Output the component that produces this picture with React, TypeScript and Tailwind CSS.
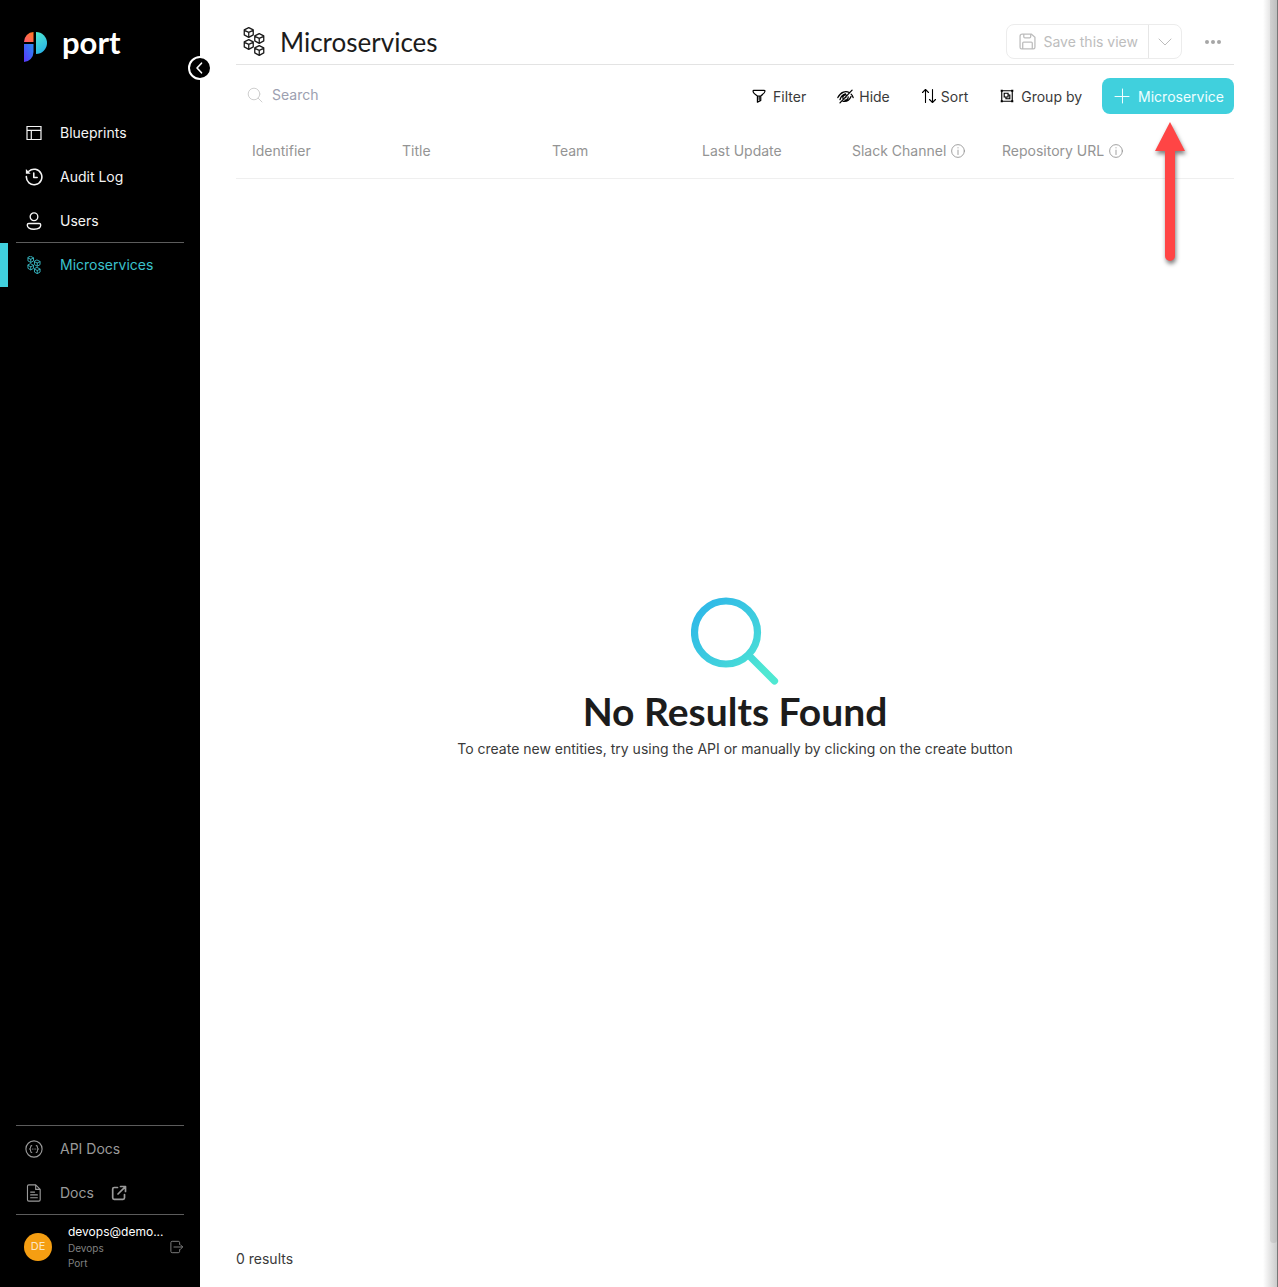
import type { ReactNode } from "react";

const CUBES = [
  [5.5, 5.5],
  [16, 11.5],
  [5.5, 17.5],
  [16, 23.5],
];

function CubesIcon({ className, stroke }: { className: string; stroke: number }) {
  return (
    <svg viewBox="0 0 21.5 29" className={className} fill="none" stroke="currentColor" strokeWidth={stroke} strokeLinejoin="round" strokeLinecap="round" aria-hidden="true">
      {CUBES.map(([x, y]) => (
        <path key={y} transform={`translate(${x} ${y})`} d="M0-4.9 4.5-2.6V2.4L0 4.9-4.5 2.4V-2.6ZM-4.3-2.2 0-.2 4.3-2.2M0-.2V4.6" />
      ))}
    </svg>
  );
}

function Icon({ children, className = "size-4", stroke = 1 }: { children: ReactNode; className?: string; stroke?: number }) {
  return (
    <svg viewBox="0 0 16 16" className={`shrink-0 ${className}`} fill="none" stroke="currentColor" strokeWidth={stroke} strokeLinecap="round" strokeLinejoin="round" aria-hidden="true">
      {children}
    </svg>
  );
}

function Logo() {
  return (
    <svg viewBox="0 0 23 30" className="h-[30px] w-[23px]" aria-hidden="true">
      <defs>
        <linearGradient id="lo" x1="1" y1="0" x2="0" y2="1">
          <stop offset="0" stopColor="#ff7a1f" />
          <stop offset="1" stopColor="#ff5a72" />
        </linearGradient>
        <linearGradient id="lb" x1="1" y1="0" x2="0" y2="1">
          <stop offset="0" stopColor="#2a8cf5" />
          <stop offset="1" stopColor="#5a35fb" />
        </linearGradient>
        <linearGradient id="lt" x1="0" y1="0" x2="0.4" y2="1">
          <stop offset="0" stopColor="#4fead0" />
          <stop offset="1" stopColor="#2ab4e6" />
        </linearGradient>
      </defs>
      <path d="M9.500 0v10H0A9.500 10 0 0 1 9.500 0Z" fill="url(#lo)" />
      <path d="M0 12h9.500v8A9.500 10 0 0 1 0 30Z" fill="url(#lb)" />
      <path d="M12 0a11 11 0 0 1 0 22Z" fill="url(#lt)" />
    </svg>
  );
}

function NavItem({ icon, label, tone, active, extra }: { icon: ReactNode; label: string; tone: string; active?: boolean; extra?: ReactNode }) {
  return (
    <li className={active ? "border-l-8 border-[#40d0dd] pl-4" : "pl-6"}>
      <a href="#" className={`flex h-11 items-center text-sm ${tone}`} aria-current={active ? "page" : undefined}>
        <span className="mr-4 flex w-5 justify-center">{icon}</span>
        {label}
        {extra}
      </a>
    </li>
  );
}

function Sidebar() {
  return (
    <aside className="relative flex w-[200px] shrink-0 flex-col bg-black">
      <a href="#" className="flex items-center gap-[15px] px-6 pt-8 text-white">
        <Logo />
        <span className="-mt-2.5 font-[Lato] text-[31px] leading-7 font-bold">port</span>
      </a>
      <button type="button" aria-label="Collapse sidebar" className="absolute top-14 -right-3 z-10 flex size-6 items-center justify-center rounded-full border-2 border-white bg-black text-white">
        <Icon className="size-4" stroke={1.6}><path d="M9.500 3.200 5 8l4.500 4.800" /></Icon>
      </button>
      <nav className="mt-[49px]" aria-label="Main">
        <ul>
          <NavItem label="Blueprints" tone="text-[#f4f4f4]" icon={<Icon stroke={1.2}><path d="M1 1.500h14v13H1zM1 5.300h14M5.300 5.300v9.200" strokeLinejoin="miter" /></Icon>} />
          <NavItem label="Audit Log" tone="text-[#f4f4f4]" icon={<Icon className="size-[18px]" stroke={1.4}><path d="M1.200 7.500A6.900 6.900 0 1 0 3.400 2.900M7.800 4.500v4h3" /><path d="M.8.8v4.200H5Z" fill="currentColor" stroke="none" /></Icon>} />
          <NavItem label="Users" tone="text-[#f4f4f4]" icon={<Icon className="size-[18px]" stroke={1.2}><circle cx="8" cy="4.200" r="3.400" /><path d="M3.400 10.200h9.200c1 0 1.400.6 1.400 1.400 0 2.300-2.300 3.700-6 3.700s-6-1.400-6-3.700c0-.8.4-1.400 1.400-1.400Z" /></Icon>} />
        </ul>
        <hr className="mx-4 -mt-px border-[#5c5c5c]" />
        <ul>
          <NavItem active label="Microservices" tone="text-[#3bc2cd]" icon={<CubesIcon className="h-[18px] w-[14px]" stroke={1.4} />} />
        </ul>
      </nav>
      <div className="mt-auto">
        <hr className="mx-4 border-[#5c5c5c]" />
        <ul className="pt-px">
          <NavItem label="API Docs" tone="text-[#9a9a9a]" icon={<Icon className="size-[18px]"><circle cx="8" cy="8" r="7.200" /><path d="M6 5c-1 0-1 .5-1 1.300C5 7.300 4.800 8 4 8c.8 0 1 .7 1 1.700 0 .8 0 1.300 1 1.300M10 5c1 0 1 .5 1 1.300 0 1 .2 1.700 1 1.700-.8 0-1 .7-1 1.700 0 .8 0 1.300-1 1.300M6.500 8h.1M8 8h.1M9.500 8h.1" strokeWidth=".9" /></Icon>} />
          <NavItem
            label="Docs"
            tone="text-[#9a9a9a]"
            icon={<Icon className="size-[18px]"><path d="M3.400.8h6.100l4 4v9.200c0 .8-.4 1.200-1.200 1.200H3.400c-.8 0-1.200-.4-1.200-1.200V2c0-.8.4-1.200 1.200-1.200ZM9.500.8v4h4M5 7.200h3.500M5 9.700h6M5 12.200h6" /></Icon>}
            extra={<Icon className="ml-[17px] size-4" stroke={1.700}><path d="M6.500 2.500H3.200c-.8 0-1.500.7-1.500 1.500v8.800c0 .8.7 1.500 1.500 1.500H12c.8 0 1.500-.7 1.500-1.500V9.500M9.500 1.500h5v5M14.200 1.800 7 9" /></Icon>}
          />
        </ul>
        <hr className="mx-4 -mt-px border-[#5c5c5c]" />
        <div className="flex h-[72px] items-center pr-4 pb-2 pl-6">
          <span className="flex size-7 items-center justify-center rounded-full bg-[#f59e12] text-[11px] text-[#fbe6c4]">DE</span>
          <div className="ml-4 flex-1 text-[10px] leading-[15px] text-[#808080]">
            <p className="text-xs leading-[18px] text-white">devops@demo...</p>
            <p>Devops</p>
            <p>Port</p>
          </div>
          <button type="button" aria-label="Log out" className="text-[#8c8c8c]">
            <Icon className="size-[14px]"><path d="M11 5V3c0-1-.6-1.500-1.500-1.500h-7C1.500 1.500 1 2 1 3v10c0 1 .5 1.500 1.500 1.500h7c.9 0 1.500-.5 1.500-1.500v-2M4.500 8h9.700M12 5.500 14.500 8 12 10.500" /></Icon>
          </button>
        </div>
      </div>
    </aside>
  );
}

function Tool({ icon, label, gap }: { icon: ReactNode; label: string; gap: string }) {
  return (
    <button type="button" className={`flex h-9 items-center text-[#3a3a3a] ${gap}`}>
      {icon}
      <span className="pt-0.5">{label}</span>
    </button>
  );
}

function Arrow() {
  return (
    <svg viewBox="0 0 40 150" className="pointer-events-none absolute top-full right-11 mt-2 h-[150px] w-10 overflow-visible drop-shadow-[1px_3px_2px_rgba(0,0,0,0.5)]" aria-hidden="true">
      <path d="M20 0 35 29H25V134a5 5 0 0 1-10 0V29H5Z" fill="#ff4545" />
    </svg>
  );
}

const COLUMNS = [
  { name: "Identifier" },
  { name: "Title" },
  { name: "Team" },
  { name: "Last Update" },
  { name: "Slack Channel", info: true },
  { name: "Repository URL", info: true },
];

export default function App() {
  return (
    <div className="flex min-h-screen bg-white font-[Inter,sans-serif] text-sm text-[#1c1c1c]">
      <Sidebar />
      <main className="flex min-w-0 flex-1 flex-col pr-[29px] pl-9">
        <header className="flex h-[65px] items-start border-b border-[#e3e3e3] pt-6">
          <CubesIcon className="mt-[3px] ml-[7px] h-[29px] w-[22px]" stroke={1.3} />
          <h1 className="ml-[15px] font-[Lato] text-[26px] leading-9">Microservices</h1>
          <div className="ml-auto flex items-center">
            <div className="flex h-[35px] rounded-lg border border-[#ececec] text-[#bdbdbd]">
              <button type="button" className="flex items-center gap-[7px] border-r border-[#e6e6e6] pr-2.5 pl-3">
                <Icon className="size-[17px]" stroke={1.200}><path d="M3 1h8.500L15 4v9.500c0 1-.5 1.500-1.500 1.500h-11C1.500 15 1 14.500 1 13.500V3c0-1.300.7-2 2-2ZM4.500 1v2.500c0 .7.300 1 1 1h4.500c.7 0 1-.3 1-1V1M3.500 15V9.500c0-.7.3-1 1-1h7c.7 0 1 .3 1 1V15" /></Icon>
                Save this view
              </button>
              <button type="button" aria-label="More save options" className="flex w-8 items-center justify-center">
                <Icon><path d="M2 5l6 6 6-6" /></Icon>
              </button>
            </div>
            <button type="button" aria-label="More actions" className="mr-3 ml-[22px] text-[#a6a6a6]">
              <svg viewBox="0 0 18 6" className="h-1.5 w-[18px]" fill="currentColor" aria-hidden="true"><circle cx="3" cy="3" r="2" /><circle cx="9" cy="3" r="2" /><circle cx="15" cy="3" r="2" /></svg>
            </button>
          </div>
        </header>

        <div className="mt-[13px] flex items-center">
          <label className="flex h-9 flex-1 items-center gap-[9px] pb-0.5 pl-[11px]">
            <Icon className="size-4 text-[#cfcfcf]"><circle cx="7" cy="7" r="5.800" /><path d="m11.200 11.200 3.800 3.800" /></Icon>
            <input type="text" aria-label="Search" placeholder="Search" className="w-full min-w-0 outline-none placeholder:text-[#9ca0b0]" />
          </label>
          <Tool gap="mr-[31px] gap-[7px]" label="Filter" icon={<Icon className="size-[14px] text-black" stroke={1.400}><path d="M2 1.500h12c.6 0 .9.400.8 1-.2 2-1.800 3.300-4.800 5.500v5L6.200 15V8C3 5.800 1.400 4.500 1.200 2.500c0-.6.2-1 .8-1ZM6.200 8H10M8.200 8.500V12" /></Icon>} />
          <Tool gap="mr-[31px] gap-[5px]" label="Hide" icon={<Icon className="size-[17px] text-black" stroke={1.200}><path d="M.8 9C3.500 3.200 8.500 2.500 11.500 4.200M13.300 5.800c.8.8 1.400 1.800 1.900 3.200M2.800 11C3.800 8 5.500 6 8 5.500M5.700 12.500c3.300.6 6-1 7.500-4.500M5.500 9.500A2.600 2.600 0 0 1 8.500 6.500M10.500 8.300a2.600 2.600 0 0 1-3 3M14.200 2 2.800 14M7.800 9h.6" /></Icon>} />
          <Tool gap="mr-8 gap-1" label="Sort" icon={<Icon className="size-4 text-black" stroke={1.100}><path d="M4.500 14.500v-13M1.500 4.500l3-3 3 3M11.500 1.500v13M8.500 11.500l3 3 3-3" /></Icon>} />
          <Tool gap="mr-5 gap-[7px]" label="Group by" icon={<Icon className="size-[14px] text-black" stroke={1.300}><path d="M2 2h12v12H2zM4.800 4.800h4.400v4.400H4.800zM9.200 6.800h2v4.400H6.800v-2" strokeLinejoin="miter" /><path d="M.8.8h2.400v2.400H.8zM12.800.8h2.400v2.400h-2.400zM.8 12.800h2.400v2.400H.8zM12.800 12.800h2.400v2.400h-2.400z" fill="currentColor" stroke="none" /></Icon>} />
          <div className="relative">
            <button type="button" className="flex h-9 items-center gap-2 rounded-lg bg-[#40d0dd] pr-2.5 pl-3 text-[#effeff]">
              <Icon className="size-4"><path d="M8.500 1v14M1 8.500h14" /></Icon>
              <span className="pt-0.5">Microservice</span>
            </button>
            <Arrow />
          </div>
        </div>

        <table className="mt-2.5 w-full table-fixed">
          <thead>
            <tr className="h-[54px] border-b border-[#efefef] text-left text-[#949494]">
              {COLUMNS.map((c) => (
                <th key={c.name} scope="col" className="w-[150px] pl-4 font-normal whitespace-nowrap">
                  <span className="flex items-center gap-[5px]">
                    {c.name}
                    {c.info && (
                      <Icon className="size-[14px]"><circle cx="8" cy="8" r="7.300" /><path d="M8 7v5M8 4.200v.3" /></Icon>
                    )}
                  </span>
                </th>
              ))}
              <td />
            </tr>
          </thead>
        </table>

        <section className="flex flex-1 flex-col items-center justify-center pb-[72px]">
          <svg viewBox="0 0 88 88" className="size-[88px]" fill="none" stroke="url(#glass)" strokeWidth="7.200" strokeLinecap="round" aria-hidden="true">
            <defs>
              <linearGradient id="glass" gradientUnits="userSpaceOnUse" x1="8" y1="8" x2="86" y2="86">
                <stop offset="0" stopColor="#2fb8e8" />
                <stop offset="0.500" stopColor="#40d0dd" />
                <stop offset="0.850" stopColor="#4fe8d2" />
              </linearGradient>
            </defs>
            <path d="M66.500 35.500a31.500 31.500 0 1 1-63 0 31.500 31.500 0 1 1 63 0ZM58.500 59l25 25" />
          </svg>
          <h2 className="mt-0.5 font-[Lato] text-[39px] leading-[48px] font-bold">No Results Found</h2>
          <p className="mt-1 leading-5 text-[#3a3a3a]">To create new entities, try using the API or manually by clicking on the create button</p>
        </section>

        <footer className="pb-[18px] leading-5 text-[#3a3a3a]">0 results</footer>
      </main>
      <div className="w-[15px] shrink-0 bg-linear-to-r from-white to-[#c8c8c8]" />
      <div className="fixed top-0 right-0 h-full w-2 border-r border-[#777]">
        <div className="h-[1243px] max-h-full rounded-b bg-linear-to-r from-[#d2d2d2] to-[#bebebe]" />
      </div>
    </div>
  );
}
